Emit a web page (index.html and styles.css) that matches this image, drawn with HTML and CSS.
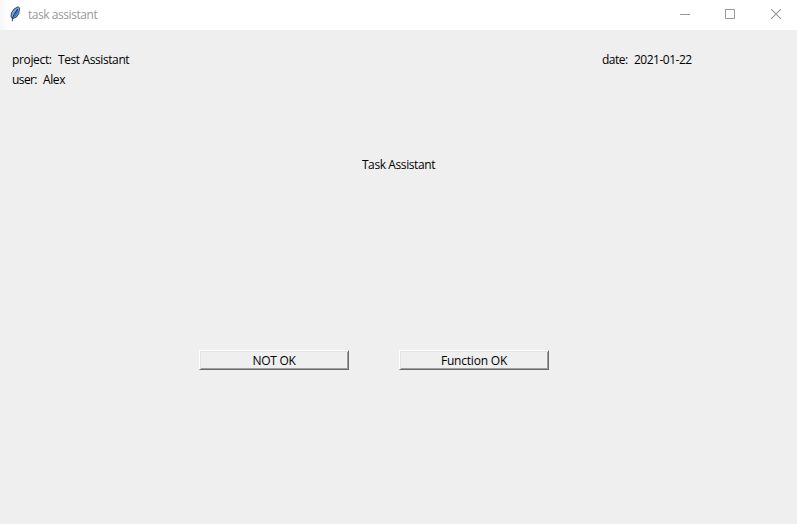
FILE: index.html
```
<!DOCTYPE html>
<html lang="en">
<head>
<meta charset="utf-8">
<title>task assistant</title>
<link rel="stylesheet" href="styles.css">
</head>
<body>
<div class="window">
  <header class="titlebar">
    <svg class="feather" width="12" height="16" viewBox="0 0 12 16">
      <path d="M9.3 .7 10.6 2.2 9.8 7.5 7.6 11 3.5 12.8 2 10.5 2.4 7 5 3Z" fill="#72a9e8" stroke="#1b2430" stroke-width=".8"/>
      <path d="M9.2 2 8.9 7 6.8 10.2 4 11.6 6.2 7Z" fill="#3975c4"/>
      <path d="M8.6 3 5.2 8.2 3.4 12.4V15.3" fill="none" stroke="#101820" stroke-width=".8"/>
    </svg>
    <h1 class="title">task assistant</h1>
    <div class="controls">
      <svg width="10" height="10" viewBox="0 0 10 10"><path d="M0 5.5H10"/></svg>
      <svg width="10" height="10" viewBox="0 0 10 10"><path d="M.5 .5H9.5V9.5H.5Z"/></svg>
      <svg class="close" width="10" height="10" viewBox="0 0 10 10"><path d="M0 0 10 10M10 0 0 10"/></svg>
    </div>
  </header>
  <main class="content">
    <section class="info">
      <div class="details">
        <p class="row"><span class="project-label">project:</span><span class="project-name">Test Assistant</span></p>
        <p class="row"><span class="user-label">user:</span><span class="user-name">Alex</span></p>
      </div>
      <p class="row"><span class="date-label">date:</span><span class="date-value">2021-01-22</span></p>
    </section>
    <h2 class="heading">Task Assistant</h2>
    <div class="actions">
      <button class="button" type="button"><span class="not-ok">NOT OK</span></button>
      <button class="button" type="button"><span class="ok">Function OK</span></button>
    </div>
  </main>
</div>
</body>
</html>
```
FILE: styles.css
```
* { box-sizing: border-box; }
body {
  margin: 0;
  background: #efefef;
  color: #000;
  font: 12px/20px "Open Sans", "Noto Sans", sans-serif;
}
h1, h2, p { margin: 0; font: inherit; }
span, h1, h2 { white-space: nowrap; }
.window { height: 524px; overflow: hidden; }
.titlebar {
  display: flex;
  align-items: center;
  height: 30px;
  padding: 0 16px 0 9px;
  background: linear-gradient(90deg, #f7f7f7, #fff 10px);
}
.feather { margin-top: -2px; }
.title { margin-left: 7px; color: #999; letter-spacing: -0.45px; }
.controls { display: flex; gap: 35px; margin: -2px 0 0 auto; }
.controls svg { fill: none; stroke: #999; stroke-width: 1; }
.controls .close { margin-left: 1px; stroke-width: 1.2; }
.content { padding-top: 20px; }
.info { display: flex; justify-content: space-between; padding: 0 105px 0 12px; }
.row { display: flex; height: 20px; }
.project-label { width: 46px; letter-spacing: -0.35px; }
.project-name { letter-spacing: -0.4px; }
.user-label { width: 31px; letter-spacing: -0.6px; }
.user-name { letter-spacing: -0.4px; }
.date-label { width: 32px; letter-spacing: -0.5px; }
.date-value { width: 58px; letter-spacing: -0.5px; }
.heading { margin-top: 65px; text-align: center; letter-spacing: -0.4px; }
.actions { display: flex; gap: 50px; margin: 175px 0 0 199px; }
.button {
  width: 150px;
  height: 20px;
  padding: 2px 0 0;
  border: 1px solid;
  border-color: #fff #696969 #696969 #fff;
  box-shadow: inset 1px 1px #e3e3e3, inset -1px -1px #a0a0a0;
  background: #efefef;
  color: #000;
  font: inherit;
  line-height: 16px;
}
.not-ok { letter-spacing: -0.3px; }
.ok { letter-spacing: -0.2px; }
```
